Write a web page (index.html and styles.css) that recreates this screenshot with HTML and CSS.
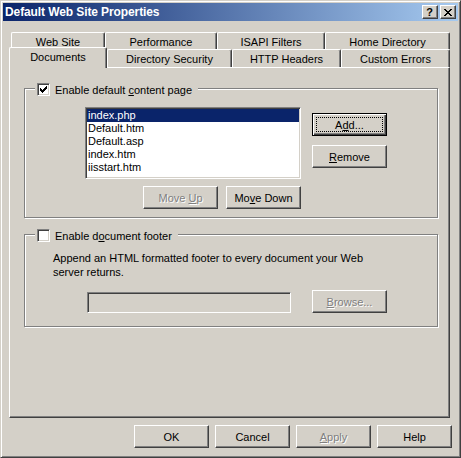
FILE: index.html
```html
<!DOCTYPE html>
<html lang="en">
<head>
    <meta charset="UTF-8">
    <title>Default Web Site Properties</title>
    <link rel="stylesheet" href="styles.css">
</head>
<body>
    <div class="window">
        <div class="titlebar">
            <span class="title">Default Web Site Properties</span>
            <div class="caption-buttons">
                <span class="cap-btn cap-help">?</span>
                <span class="cap-btn">
                    <svg width="8" height="7" viewBox="0 0 8 7" shape-rendering="crispEdges">
                        <path d="M0 0h2v1H0z M6 0h2v1H6z M1 1h2v1H1z M5 1h2v1H5z M2 2h4v1H2z M3 3h2v1H3z M2 4h4v1H2z M1 5h2v1H1z M5 5h2v1H5z M0 6h2v1H0z M6 6h2v1H6z" fill="#000"/>
                    </svg>
                </span>
            </div>
        </div>

        <div class="tabstrip">
            <div class="tabrow row-back">
                <div class="tab w-website">Web Site</div>
                <div class="tab w-performance">Performance</div>
                <div class="tab w-isapi">ISAPI Filters</div>
                <div class="tab w-home">Home Directory</div>
            </div>
            <div class="tabrow row-front">
                <div class="tab tab-active">Documents</div>
                <div class="tab w-security">Directory Security</div>
                <div class="tab w-headers">HTTP Headers</div>
                <div class="tab w-errors">Custom Errors</div>
            </div>
        </div>

        <div class="panel">
            <div class="group group-default">
                <div class="group-title">
                    <span class="checkbox">
                        <svg width="7" height="7" viewBox="0 0 7 7" shape-rendering="crispEdges">
                            <path d="M0 2h1v3H0z M1 3h1v3H1z M2 4h1v3H2z M3 3h1v3H3z M4 2h1v3H4z M5 1h1v3H5z M6 0h1v3H6z" fill="#000"/>
                        </svg>
                    </span>
                    <span>Enable default <u>c</u>ontent page</span>
                </div>
                <div class="doc-row">
                    <ul class="listbox">
                        <li class="selected">index.php</li>
                        <li>Default.htm</li>
                        <li>Default.asp</li>
                        <li>index.htm</li>
                        <li>iisstart.htm</li>
                    </ul>
                    <div class="side-buttons">
                        <button class="btn btn-default">A<u>d</u>d...</button>
                        <button class="btn"><u>R</u>emove</button>
                    </div>
                </div>
                <div class="move-row">
                    <button class="btn" disabled>Move <u>U</u>p</button>
                    <button class="btn">Mo<u>v</u>e Down</button>
                </div>
            </div>

            <div class="group group-footer">
                <div class="group-title">
                    <span class="checkbox"></span>
                    <span>Enable d<u>o</u>cument footer</span>
                </div>
                <p class="description">Append an HTML formatted footer to every document your Web server returns.</p>
                <div class="footer-row">
                    <div class="textfield"></div>
                    <button class="btn" disabled><u>B</u>rowse...</button>
                </div>
            </div>
        </div>

        <div class="dialog-buttons">
            <button class="btn">OK</button>
            <button class="btn">Cancel</button>
            <button class="btn" disabled><u>A</u>pply</button>
            <button class="btn">Help</button>
        </div>
    </div>
</body>
</html>
```

FILE: styles.css
```css
body {
    margin: 0;
    background-color: #d4d0c8;
    font-family: "Liberation Sans", Arial, sans-serif;
    font-size: 11px;
    color: #000;
}

/* window frame: light/white outside, grey/dark on the shadow side */
.window {
    box-sizing: border-box;
    width: 461px;
    height: 458px;
    padding: 2px;
    border: 1px solid;
    border-color: #d4d0c8 #404040 #404040 #d4d0c8;
    box-shadow: inset 1px 1px #fff, inset -1px -1px #808080;
}

.titlebar {
    display: flex;
    align-items: center;
    justify-content: space-between;
    height: 18px;
    background: linear-gradient(to right, #0a246a, #a6caf0);
}
.title {
    padding-left: 2px;
    color: #fff;
    font-weight: bold;
    font-size: 12px;
    letter-spacing: -0.1px;
}
.caption-buttons {
    display: flex;
    gap: 2px;
    margin-right: 2px;
}
.cap-btn {
    box-sizing: border-box;
    width: 16px;
    height: 14px;
    display: flex;
    align-items: center;
    justify-content: center;
    background-color: #d4d0c8;
    border: 1px solid;
    border-color: #fff #404040 #404040 #fff;
    box-shadow: inset -1px -1px #808080;
}
.cap-help {
    font-weight: bold;
    font-size: 11px;
    line-height: 12px;
    padding-right: 1px;
}

/* property sheet tabs */
.tabstrip {
    margin-top: 11px;
    padding-left: 8px;
}
.tabrow {
    display: flex;
    align-items: flex-start;
}
.row-back { height: 17px; }
.row-front { height: 18px; }
.tab {
    box-sizing: border-box;
    height: 100%;
    display: flex;
    justify-content: center;
    align-items: center;
    padding-top: 1px;
    border: 1px solid;
    border-bottom: none;
    border-color: #fff #404040 #fff #fff;
    border-radius: 2px 2px 0 0;
    box-shadow: inset -1px 0 #808080;
    white-space: nowrap;
}
.w-website { width: 94px; }
.w-performance { width: 112px; }
.w-isapi { width: 108px; }
.w-home { width: 125px; }
.w-security { width: 125px; }
.w-headers { width: 109px; }
.w-errors { width: 109px; }
.tab-active {
    position: relative;
    z-index: 1;
    width: 98px;
    height: 21px;
    margin: -2px 0 0 -2px;
    padding-top: 0;
    padding-bottom: 2px;
    background-color: #d4d0c8;
}

.panel {
    box-sizing: border-box;
    width: 441px;
    height: 351px;
    margin-left: 6px;
    padding: 20px 0 0 14px;
    border: 1px solid;
    border-color: #fff #404040 #404040 #fff;
    box-shadow: inset -1px -1px #808080;
}

/* etched group boxes */
.group {
    box-sizing: border-box;
    width: 414px;
    border: 1px solid #808080;
    box-shadow: inset 1px 1px #fff, 1px 1px #fff;
}
.group-default { height: 130px; }
.group-footer {
    height: 93px;
    margin-top: 16px;
}
.group-title {
    display: flex;
    align-items: center;
    width: fit-content;
    height: 13px;
    margin: -6px 0 0 10px;
    padding: 0 6px 0 2px;
    background-color: #d4d0c8;
    white-space: nowrap;
}
.checkbox {
    box-sizing: border-box;
    width: 13px;
    height: 13px;
    margin-right: 5px;
    display: flex;
    align-items: center;
    justify-content: center;
    background-color: #fff;
    border: 1px solid;
    border-color: #808080 #fff #fff #808080;
    box-shadow: inset 1px 1px #404040, inset -1px -1px #d4d0c8;
}

.doc-row {
    display: flex;
    align-items: flex-start;
    margin: 11px 0 0 60px;
}
.listbox {
    box-sizing: border-box;
    width: 216px;
    height: 72px;
    margin: 0;
    padding: 1px;
    list-style: none;
    background-color: #fff;
    border: 1px solid;
    border-color: #808080 #fff #fff #808080;
    box-shadow: inset 1px 1px #404040, inset -1px -1px #d4d0c8;
}
.listbox li {
    height: 13px;
    line-height: 13px;
    padding-left: 1px;
}
.listbox .selected {
    background-color: #0a246a;
    color: #fff;
}
.side-buttons {
    display: flex;
    flex-direction: column;
    gap: 9px;
    margin: 6px 0 0 11px;
}
.move-row {
    display: flex;
    gap: 8px;
    margin: 7px 0 0 118px;
}

.description {
    width: 335px;
    margin: 9px 0 0 28px;
    line-height: 14px;
}
.footer-row {
    display: flex;
    align-items: flex-end;
    gap: 21px;
    margin: 11px 0 0 62px;
}
.textfield {
    box-sizing: border-box;
    width: 204px;
    height: 21px;
    background-color: #d4d0c8;
    border: 1px solid;
    border-color: #808080 #fff #fff #808080;
    box-shadow: inset 1px 1px #404040, inset -1px -1px #d4d0c8;
}

/* push buttons */
.btn {
    position: relative;
    box-sizing: border-box;
    width: 75px;
    height: 23px;
    padding: 0;
    font-family: "Liberation Sans", Arial, sans-serif;
    font-size: 11px;
    color: #000;
    background-color: #d4d0c8;
    border: 1px solid;
    border-color: #fff #404040 #404040 #fff;
    box-shadow: inset -1px -1px #808080;
    border-radius: 0;
}
.btn:disabled {
    color: #808080;
    text-shadow: 1px 1px #fff;
}
.btn-default {
    border-color: #000;
    box-shadow: inset 1px 1px #fff, inset -1px -1px #404040, inset -2px -2px #808080;
}
.btn-default::after {
    content: "";
    position: absolute;
    top: 3px;
    left: 3px;
    right: 3px;
    bottom: 3px;
    border: 1px dotted #000;
}

.dialog-buttons {
    display: flex;
    justify-content: flex-end;
    gap: 6px;
    margin-top: 7px;
    padding-right: 6px;
}
```
